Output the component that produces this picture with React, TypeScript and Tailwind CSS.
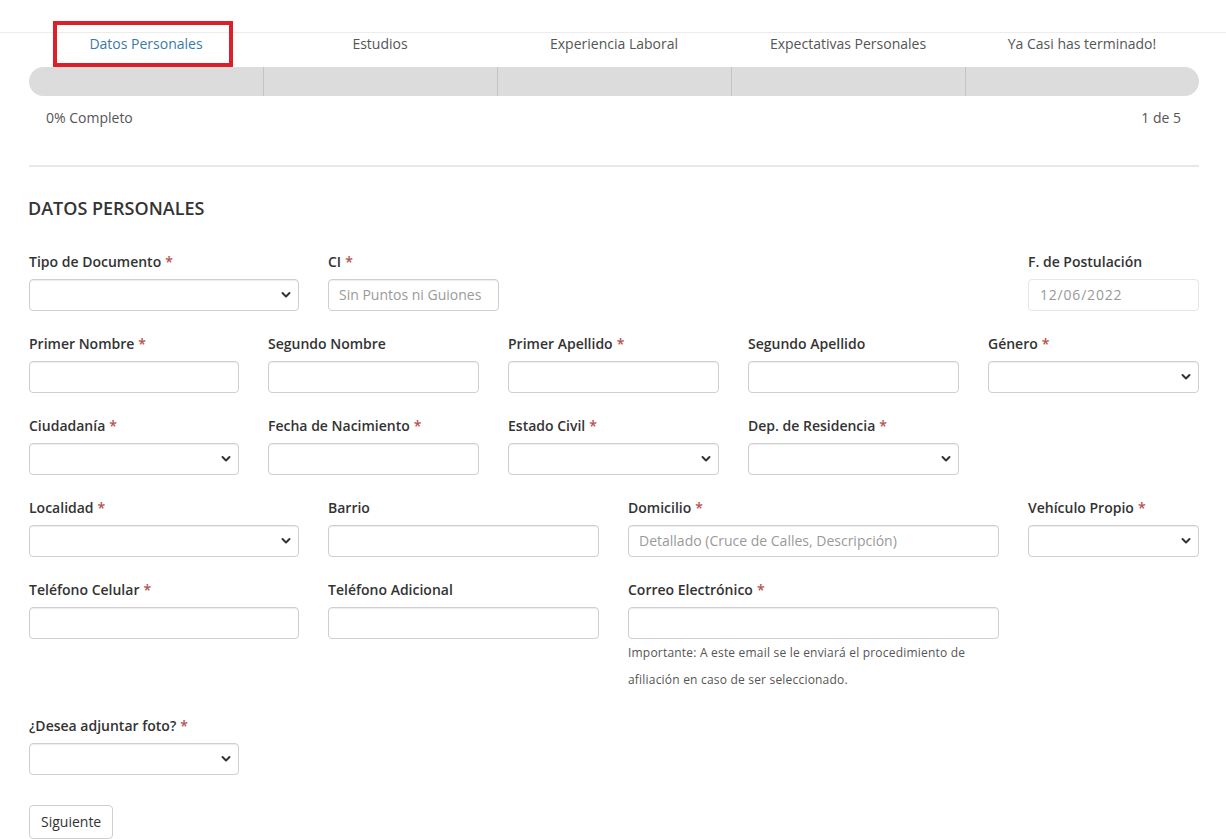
import React from 'react';

type Field = {
  label: string;
  required?: boolean;
  kind: 'input' | 'select';
  placeholder?: string;
  col: number; // ancho de la columna (incluye la separación)
};

// pasos del asistente
const steps = ['Datos Personales', 'Estudios', 'Experiencia Laboral', 'Expectativas Personales', 'Ya Casi has terminado!'];

// filas del formulario
const rows: Field[][] = [
  [
    { label: 'Primer Nombre', required: true, kind: 'input', col: 239 },
    { label: 'Segundo Nombre', kind: 'input', col: 240 },
    { label: 'Primer Apellido', required: true, kind: 'input', col: 240 },
    { label: 'Segundo Apellido', kind: 'input', col: 240 },
    { label: 'Género', required: true, kind: 'select', col: 240 },
  ],
  [
    { label: 'Ciudadanía', required: true, kind: 'select', col: 239 },
    { label: 'Fecha de Nacimiento', required: true, kind: 'input', col: 240 },
    { label: 'Estado Civil', required: true, kind: 'select', col: 240 },
    { label: 'Dep. de Residencia', required: true, kind: 'select', col: 240 },
  ],
  [
    { label: 'Localidad', required: true, kind: 'select', col: 299 },
    { label: 'Barrio', kind: 'input', col: 300 },
    { label: 'Domicilio', required: true, kind: 'input', placeholder: 'Detallado (Cruce de Calles, Descripción)', col: 400 },
    { label: 'Vehículo Propio', required: true, kind: 'select', col: 200 },
  ],
];

function Chevron() {
  return (
    <svg width="10" height="7" viewBox="0 0 10 7" className="pointer-events-none absolute right-[8px] top-1/2 -translate-y-1/2">
      <path d="M1.5 1.5 L5 5 L8.5 1.5" fill="none" stroke="#333" strokeWidth="2" strokeLinecap="round" strokeLinejoin="round" />
    </svg>
  );
}

const base =
  'block h-[32px] w-full rounded-[4px] border border-[#cfcfcf] bg-white px-[10px] pb-[2px] text-[14px] text-[#555] shadow-[inset_0_1px_1px_rgba(0,0,0,0.075)] outline-none placeholder:text-[#9a9a9a]';

function Control({ kind, placeholder }: { kind: 'input' | 'select'; placeholder?: string }) {
  if (kind === 'select') {
    return (
      <div className="relative">
        <select className={base + ' appearance-none'} defaultValue="">
          <option value=""></option>
        </select>
        <Chevron />
      </div>
    );
  }
  return <input className={base} placeholder={placeholder} />;
}

function Label({ text, required }: { text: string; required?: boolean }) {
  return (
    <div className="mb-[7px] h-[20px] text-[14px] font-semibold leading-[20px] text-[#333]">
      {text}
      {required && <span className="ml-[4px] text-[#b5504e]">*</span>}
    </div>
  );
}

function FieldCol({ f }: { f: Field }) {
  return (
    <div style={{ width: f.col }} className="shrink-0 pr-[29px]">
      <Label text={f.label} required={f.required} />
      <Control kind={f.kind} placeholder={f.placeholder} />
    </div>
  );
}

export default function App() {
  return (
    <div className="relative min-h-screen bg-white text-[#555]" style={{ fontFamily: '"Open Sans", "Noto Sans", sans-serif' }}>
      {/* línea superior */}
      <div className="h-[33px] border-b border-[#ececec]" />

      <div className="pl-[29px]">
        <div className="w-[1170px]">
          {/* pestañas */}
          <div className="mt-[1px] grid grid-cols-5 text-[14px] leading-[20px]">
            {steps.map((s, i) => (
              <div key={s} className={'text-center ' + (i === 0 ? 'text-[#3b7ba3]' : 'text-[#555]')}>
                {s}
              </div>
            ))}
          </div>

          {/* barra de progreso */}
          <div className="mt-[13px] grid h-[29px] grid-cols-5 overflow-hidden rounded-full bg-[#dcdcdc]">
            {steps.map((s, i) => (
              <div key={s} className={i > 0 ? 'border-l border-[#c4c4c4]' : ''} />
            ))}
          </div>

          <div className="mt-[12px] flex justify-between px-[17px] text-[14px] leading-[20px] text-[#555]">
            <span>0% Completo</span>
            <span className="mr-[1px]">1 de 5</span>
          </div>

          <div className="mt-[37px] h-[2px] bg-[#e8e8e8]" />

          <h2 className="mt-[28px] -ml-[1px] text-[18px] font-semibold uppercase leading-[26px] text-[#333]">Datos Personales</h2>
        </div>

        {/* formulario */}
        <div className="mt-[31px]">
          {/* fila 1 */}
          <div className="flex">
            <div className="w-[299px] shrink-0 pr-[29px]">
              <Label text="Tipo de Documento" required />
              <Control kind="select" />
            </div>
            <div className="w-[200px] shrink-0 pr-[29px]">
              <Label text="CI" required />
              <input className={base} placeholder="Sin Puntos ni Guiones" />
            </div>
            <div className="w-[500px] shrink-0" />
            <div className="w-[171px] shrink-0">
              <Label text="F. de Postulación" />
              <div className="flex h-[32px] items-center rounded-[4px] border border-[#e6e6e6] px-[11px] pb-[2px] text-[14px] tracking-[0.8px] text-[#999]">
                12/06/2022
              </div>
            </div>
          </div>

          {rows.map((row, i) => (
            <div key={i} className="mt-[23px] flex">
              {row.map((f, j) => (
                <FieldCol key={j} f={f} />
              ))}
            </div>
          ))}

          {/* fila 5 */}
          <div className="mt-[23px] flex">
            <FieldCol f={{ label: 'Teléfono Celular', required: true, kind: 'input', col: 299 }} />
            <FieldCol f={{ label: 'Teléfono Adicional', kind: 'input', col: 300 }} />
            <div className="w-[400px] shrink-0 pr-[29px]">
              <Label text="Correo Electrónico" required />
              <Control kind="input" />
              <p className="text-[12px] leading-[27px] tracking-[0.2px] text-[#555]">
                Importante: A este email se le enviará el procedimiento de afiliación en caso de ser seleccionado.
              </p>
            </div>
          </div>

          <div className="mt-[23px] w-[239px] pr-[29px]">
            <Label text="¿Desea adjuntar foto?" required />
            <Control kind="select" />
          </div>

          <button className="mt-[30px] h-[34px] rounded-[4px] border border-[#cfcfcf] bg-white px-[11px] pb-[1px] text-[14px] text-[#333]">
            Siguiente
          </button>
        </div>
      </div>

      {/* recuadro rojo de anotación */}
      <div className="pointer-events-none absolute left-[53px] top-[21px] h-[46px] w-[180px] border-[4px] border-[#dc1f28]" />
    </div>
  );
}
